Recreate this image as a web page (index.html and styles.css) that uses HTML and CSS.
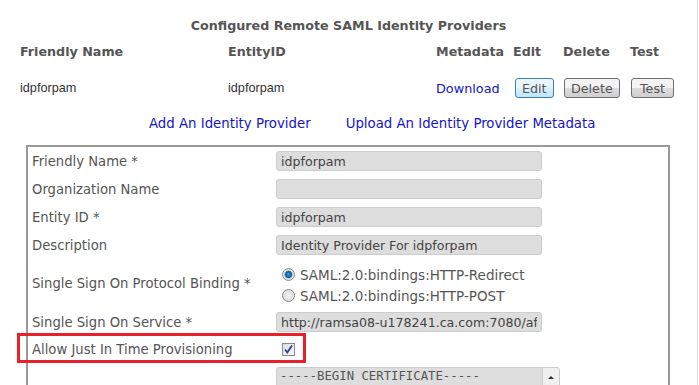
FILE: index.html
```html
<!DOCTYPE html>
<html lang="en">
<head>
    <meta charset="UTF-8">
    <title>Remote SAML Identity Providers</title>
    <link rel="stylesheet" href="styles.css">
</head>
<body>
    <div class="page">
        <h2 class="title">Configured Remote SAML Identity Providers</h2>

        <!-- Provider list -->
        <div class="providers">
            <div class="row head">
                <span>Friendly Name</span>
                <span>EntityID</span>
                <span>Metadata</span>
                <span>Edit</span>
                <span>Delete</span>
                <span>Test</span>
            </div>
            <div class="row data">
                <span>idpforpam</span>
                <span>idpforpam</span>
                <span><a href="#" class="link">Download</a></span>
                <span><button class="btn btn-focus">Edit</button></span>
                <span><button class="btn">Delete</button></span>
                <span><button class="btn btn-wide">Test</button></span>
            </div>
        </div>

        <div class="actions">
            <a href="#" class="link">Add An Identity Provider</a>
            <a href="#" class="link">Upload An Identity Provider Metadata</a>
        </div>

        <!-- Provider form -->
        <div class="form-box">
            <div class="field">
                <label>Friendly Name *</label>
                <input class="text" type="text" value="idpforpam">
            </div>
            <div class="field">
                <label>Organization Name</label>
                <input class="text" type="text" value="">
            </div>
            <div class="field">
                <label>Entity ID *</label>
                <input class="text" type="text" value="idpforpam">
            </div>
            <div class="field">
                <label>Description</label>
                <input class="text" type="text" value="Identity Provider For idpforpam">
            </div>
            <div class="field">
                <label>Single Sign On Protocol Binding *</label>
                <div class="radios">
                    <label class="opt"><input class="radio" type="radio" name="binding" checked>SAML:2.0:bindings:HTTP-Redirect</label>
                    <label class="opt"><input class="radio" type="radio" name="binding">SAML:2.0:bindings:HTTP-POST</label>
                </div>
            </div>
            <div class="field">
                <label>Single Sign On Service *</label>
                <input class="text" type="text" value="http://ramsa08-u178241.ca.com:7080/affwebservices/public/saml2sso">
            </div>
            <div class="field jit">
                <label>Allow Just In Time Provisioning</label>
                <div>
                    <span class="check">
                        <svg width="11" height="11" viewBox="0 0 11 11">
                            <path d="M2 5.5 L4.3 8.5 L9 1.5" fill="none" stroke="#2a3f9a" stroke-width="1.8"/>
                        </svg>
                    </span>
                </div>
                <div class="highlight"></div>
            </div>
            <div class="field">
                <label></label>
                <div class="cert">
                    <div class="cert-text">-----BEGIN CERTIFICATE-----</div>
                    <div class="scroll">
                        <span class="arrow"></span>
                    </div>
                </div>
            </div>
        </div>
    </div>
</body>
</html>
```

FILE: styles.css
```css
body {
    margin: 0;
    padding: 0;
    background-color: #fff;
    font-family: "DejaVu Sans", Verdana, sans-serif;
    font-size: 13px;
    color: #555;
}
.page {
    width: 697px;
    height: 385px;
    border-right: 1px solid #ddd;
    overflow: hidden;
}
.title {
    margin: 0;
    padding-top: 18px;
    height: 18px;
    font-size: 12.7px;
    font-weight: bold;
    text-align: center;
    color: #555;
}
.providers {
    padding-left: 20px;
}
.row {
    display: grid;
    grid-template-columns: 208px 208px 77px 50px 67px 50px;
    align-items: center;
}
.head {
    height: 30px;
    font-size: 12.7px;
    font-weight: bold;
    color: #555;
}
.data {
    height: 44px;
    font-family: "Liberation Sans", Arial, sans-serif;
    font-size: 12.7px;
    color: #333;
}
.link {
    color: #1414c8;
    text-decoration: none;
    font-family: "DejaVu Sans", Verdana, sans-serif;
    font-size: 12.8px;
}
.actions .link {
    font-size: 13.3px;
}
.btn {
    font-family: "DejaVu Sans", Verdana, sans-serif;
    font-size: 12.7px;
    color: #555;
    height: 20px;
    margin-left: 1px;
    padding: 0 6px;
    border: 1px solid #707070;
    border-radius: 3px;
    background: linear-gradient(#f3f3f3 50%, #dddddd 50%, #cfcfcf);
}
.btn-focus {
    margin-left: 2px;
    border-color: #3c7fb1;
    background: linear-gradient(#eaf6fd 50%, #d9f0fc 50%, #bee6fd);
}
.btn-wide {
    padding: 0 8px;
}
.actions {
    display: flex;
    gap: 35px;
    padding-left: 149px;
    height: 26px;
    align-items: center;
}
.form-box {
    margin: 9px 0 0 26px;
    width: 636px;
    border: 2px solid #999;
    border-bottom: none;
    padding-left: 4px;
}
.field {
    position: relative;
    display: grid;
    grid-template-columns: 244px 1fr;
    align-items: center;
    padding: 4px 0;
}
.field label {
    font-size: 13.2px;
    color: #555;
}
.text {
    box-sizing: border-box;
    width: 266px;
    height: 20px;
    margin: 0;
    padding: 0 4px;
    background-color: #ddd;
    border: 1px solid #ccc;
    border-radius: 3px;
    font-family: "DejaVu Sans", Verdana, sans-serif;
    font-size: 12.6px;
    color: #444;
}
.radios {
    padding-top: 1px;
    margin-bottom: -2px;
}
.radios .opt {
    display: flex;
    align-items: center;
    height: 21px;
    font-size: 13.5px;
}
.radio {
    appearance: none;
    box-sizing: border-box;
    width: 13px;
    height: 13px;
    margin: 0 5px 0 6px;
    border: 1px solid #8a8a8a;
    border-radius: 50%;
    background: radial-gradient(circle, #f4f4f4, #d4d4d4);
}
.radio:checked {
    background: radial-gradient(circle, #3aa0e0 0, #0b5d96 3px, #5c8fb3 3.6px, #dcdcdc 4.2px, #f2f2f2);
}
.check {
    display: flex;
    align-items: center;
    justify-content: center;
    box-sizing: border-box;
    width: 13px;
    height: 13px;
    margin-left: 6px;
    border: 1px solid #8a8a8a;
    background: linear-gradient(135deg, #dcdcdc, #fafafa);
}
.jit {
    height: 18px;
}
.highlight {
    position: absolute;
    left: -15px;
    top: -3px;
    width: 283px;
    height: 24px;
    border: 3px solid #e8202a;
}
.cert {
    display: flex;
    box-sizing: border-box;
    width: 284px;
    height: 60px;
    margin-top: 1px;
    background-color: #ddd;
    border: 1px solid #ccc;
    border-radius: 3px;
    overflow: hidden;
}
.cert-text {
    flex: 1;
    padding: 0 3px;
    font-family: "DejaVu Sans Mono", monospace;
    font-size: 12.3px;
    line-height: 17px;
    color: #555;
    white-space: nowrap;
    overflow: hidden;
}
.scroll {
    width: 16px;
    border-left: 1px solid #ccc;
    background-color: #f0f0f0;
    display: flex;
    justify-content: center;
    padding-top: 8px;
}
.arrow {
    width: 0;
    height: 0;
    border-left: 3px solid transparent;
    border-right: 3px solid transparent;
    border-bottom: 3px solid #333;
}
```
